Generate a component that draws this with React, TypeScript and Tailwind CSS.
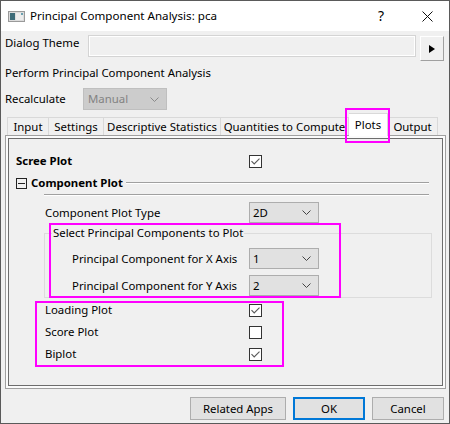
import React from "react";

function Check({ checked }: { checked?: boolean }) {
  return (
    <span className="w-[13px] h-[13px] border border-[#333333] bg-white flex items-center justify-center shrink-0">
      {checked && (
        <svg width="9" height="7" viewBox="0 0 9 7">
          <path d="M0.5 3.2 L3.2 6 L8.5 0.6" stroke="#5a5a5a" strokeWidth="1.1" fill="none" />
        </svg>
      )}
    </span>
  );
}

function Chevron({ color = "#444" }: { color?: string }) {
  return (
    <svg width="9" height="5" viewBox="0 0 9 5">
      <path d="M0.5 0.5 L4.5 4.5 L8.5 0.5" stroke={color} strokeWidth="1" fill="none" />
    </svg>
  );
}

function Select({ value }: { value: string }) {
  return (
    <div className="w-[70px] h-[21px] border border-[#adadad] bg-[#e1e1e1] flex items-center justify-between pl-[3px] pr-[7px]">
      <span>{value}</span>
      <Chevron />
    </div>
  );
}

function Tab({ label, w }: { label: string; w: string }) {
  return (
    <div className={`${w} h-[18px] bg-[#f0f0f0] border border-[#d9d9d9] border-b-0 border-r-0 flex items-center justify-center whitespace-nowrap`}>
      {label}
    </div>
  );
}

export default function App() {
  return (
    <div className="relative w-[450px] h-[424px] border border-[#5a5a5a] bg-[#f0f0f0] text-[11.4px] text-black font-['Noto_Sans',sans-serif] leading-[16px] overflow-hidden">
      {/* title bar */}
      <div className="h-[30px] bg-white flex items-center">
        <svg className="ml-[7px]" width="17" height="11" viewBox="0 0 17 11">
          <rect x="0.5" y="0.5" width="16" height="10" fill="#dcdcdc" stroke="#9a9a9a" />
          <rect x="2" y="2" width="5" height="7" fill="#3d6b78" />
          <rect x="8" y="2" width="7" height="7" fill="#ececec" />
          <rect x="13" y="2" width="2" height="2" fill="#6aa0b0" />
        </svg>
        <span className="ml-[5px] text-[11.6px]">Principal Component Analysis: pca</span>
        <span className="ml-auto mr-[38px] text-[14px]">?</span>
        <svg className="mr-[16px]" width="11" height="11" viewBox="0 0 11 11">
          <path d="M0.5 0.5 L10.5 10.5 M10.5 0.5 L0.5 10.5" stroke="#111" strokeWidth="1" />
        </svg>
      </div>

      {/* dialog theme */}
      <div className="mt-[4px] h-[26px] flex items-start">
        <span className="ml-[4px] w-[83px]">Dialog Theme</span>
        <div className="w-[328px] h-[22px] border border-[#d4d4d4] bg-[#f0f0f0] shadow-[inset_0_0_0_1px_#ffffff]" />
        <div className="ml-[4px] mt-px w-[24px] h-[25px] border border-[#a0a0a0] border-t-white border-l-white bg-[#f0f0f0] flex items-center justify-center">
          <svg width="8" height="8" viewBox="0 0 8 8">
            <path d="M1 0 L7 4 L1 8 Z" fill="#000" />
          </svg>
        </div>
      </div>

      <div className="h-[24px] leading-[24px] pl-[4px]">Perform Principal Component Analysis</div>

      <div className="h-[25px] pt-[3px] flex items-start">
        <span className="ml-[4px] w-[78px] mt-[3px]">Recalculate</span>
        <div className="w-[84px] h-[22px] bg-[#cccccc] border border-[#bfbfbf] flex items-center justify-between pl-[4px] pr-[7px] text-[#838383]">
          <span>Manual</span>
          <Chevron color="#8a8a8a" />
        </div>
      </div>

      {/* tabs */}
      <div className="h-[25px] flex items-end pl-[6px]">
        <Tab label="Input" w="w-[41px]" />
        <Tab label="Settings" w="w-[55px]" />
        <Tab label="Descriptive Statistics" w="w-[117px]" />
        <div className="w-[129px] h-[18px] border border-[#d9d9d9] border-b-0 flex items-center justify-center whitespace-nowrap">Quantities to Compute</div>
        <div className="w-[39px] h-[23px] bg-white border border-[#d9d9d9] border-b-0 border-l-0 flex items-center justify-center -mb-px relative z-10">Plots</div>
        <div className="w-[50px] h-[18px] border border-[#d9d9d9] border-b-0 border-l-0 flex items-center justify-center">Output</div>
      </div>

      {/* panel */}
      <div className="ml-[4px] w-[441px] h-[254px] border border-[#a0a0a0] bg-[#fbfbfb] p-[2px]">
        <div className="h-full border border-[#6d6d6d] bg-[#f0f0f0] flex flex-col">
          <div className="mt-[14px] h-[16px] flex items-center pl-[7px]">
            <span className="w-[233px] font-bold">Scree Plot</span>
            <Check checked />
          </div>

          <div className="mt-[6px] h-[16px] flex items-center pl-[7px] pr-[13px]">
            <span className="w-[11px] h-[11px] border border-[#222] flex items-center justify-center">
              <span className="w-[7px] h-px bg-[#222]" />
            </span>
            <span className="ml-[4px] font-bold">Component Plot</span>
            <div className="ml-[3px] flex-1 h-[2px] border-t border-[#a0a0a0] border-b border-b-white" />
          </div>

          <div className="mt-[3px] ml-[35px] mr-[13px] h-[2px] border-t border-[#a0a0a0] border-b border-b-white" />

          <div className="mt-[6px] h-[21px] flex items-center pl-[36px]">
            <span className="w-[204px]">Component Plot Type</span>
            <Select value="2D" />
          </div>

          <fieldset className="mt-[2px] ml-[35px] w-[388px] border border-[#dcdcdc] pb-px">
            <legend className="ml-[7px] px-px">Select Principal Components to Plot</legend>
            <div className="mt-[7px] h-[21px] flex items-center pl-[27px]">
              <span className="w-[177px]">Principal Component for X Axis</span>
              <Select value="1" />
            </div>
            <div className="mt-[6px] h-[21px] flex items-center pl-[27px]">
              <span className="w-[177px]">Principal Component for Y Axis</span>
              <Select value="2" />
            </div>
          </fieldset>

          <div className="mt-[4px] h-[16px] flex items-center pl-[36px]">
            <span className="w-[204px]">Loading Plot</span>
            <Check checked />
          </div>
          <div className="mt-[6px] h-[16px] flex items-center pl-[36px]">
            <span className="w-[204px]">Score Plot</span>
            <Check />
          </div>
          <div className="mt-[6px] h-[16px] flex items-center pl-[36px]">
            <span className="w-[204px]">Biplot</span>
            <Check checked />
          </div>
        </div>
      </div>

      {/* buttons */}
      <div className="mt-[8px] flex justify-end gap-[7px] pr-[5px]">
        <button className="w-[96px] h-[23px] bg-[#e1e1e1] border border-[#adadad]">Related Apps</button>
        <button className="w-[72px] h-[23px] bg-[#e1e1e1] border-2 border-[#0078d7]">OK</button>
        <button className="w-[72px] h-[23px] bg-[#e1e1e1] border border-[#adadad]">Cancel</button>
      </div>

      {/* annotation highlights */}
      <div className="absolute left-[344px] top-[107px] w-[45px] h-[35px] border-2 border-[#ff00ff] z-20" />
      <div className="absolute left-[48px] top-[222px] w-[292px] h-[75px] border-2 border-[#ff00ff] z-20" />
      <div className="absolute left-[34px] top-[300px] w-[249px] h-[66px] border-2 border-[#ff00ff] z-20" />
    </div>
  );
}
